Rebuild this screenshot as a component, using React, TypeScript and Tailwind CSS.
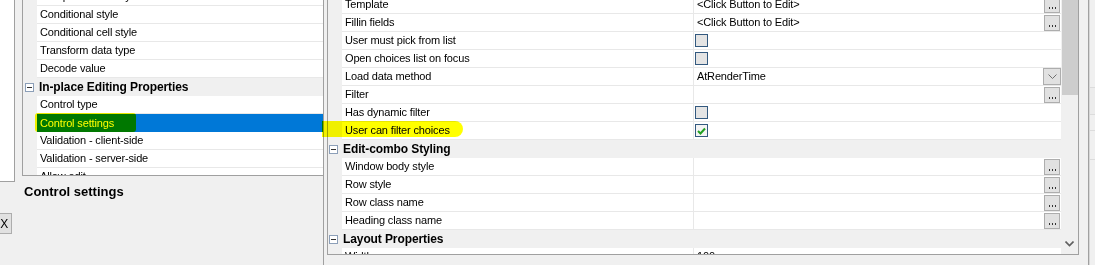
import React from "react";

type Item = {
  name: string;
  header?: boolean;
  value?: string;
  check?: "on" | "off";
  btn?: "dots" | "drop";
  selected?: boolean;
};

const backRows: Item[] = [
  { name: "Compute summary values" },
  { name: "Conditional style" },
  { name: "Conditional cell style" },
  { name: "Transform data type" },
  { name: "Decode value" },
  { name: "In-place Editing Properties", header: true },
  { name: "Control type" },
  { name: "Control settings", selected: true },
  { name: "Validation - client-side" },
  { name: "Validation - server-side" },
  { name: "Allow edit" },
];

const frontRows: Item[] = [
  { name: "Template", value: "<Click Button to Edit>", btn: "dots" },
  { name: "Fillin fields", value: "<Click Button to Edit>", btn: "dots" },
  { name: "User must pick from list", check: "off" },
  { name: "Open choices list on focus", check: "off" },
  { name: "Load data method", value: "AtRenderTime", btn: "drop" },
  { name: "Filter", btn: "dots" },
  { name: "Has dynamic filter", check: "off" },
  { name: "User can filter choices", check: "on" },
  { name: "Edit-combo Styling", header: true },
  { name: "Window body style", btn: "dots" },
  { name: "Row style", btn: "dots" },
  { name: "Row class name", btn: "dots" },
  { name: "Heading class name", btn: "dots" },
  { name: "Layout Properties", header: true },
  { name: "Width", value: "100" },
];

const Minus = () => (
  <span className="flex h-[9px] w-[9px] items-center justify-center border border-[#8c9fb8] bg-white">
    <span className="block h-[1px] w-[5px] bg-[#333]" />
  </span>
);

const Check = ({ on }: { on: boolean }) => (
  <span
    className={
      on
        ? "ml-[1px] flex h-[13px] w-[13px] items-center justify-center border border-[#33597f] bg-[#f4f4f4]"
        : "ml-[1px] flex h-[13px] w-[13px] items-center justify-center border border-[#33597f] bg-[#e4e4e4]"
    }
  >
    {on && (
      <svg width="9" height="8" viewBox="0 0 9 8">
        <path d="M1 4 L3.5 6.5 L8 1.5" fill="none" stroke="#22a022" strokeWidth="2" />
      </svg>
    )}
  </span>
);

const Dots = () => (
  <span className="mr-[1px] flex h-[16px] w-[16px] items-start justify-center gap-[2px] border border-[#adadad] bg-[#e1e1e1] pt-[9px]">
    <i className="block h-[2px] w-[1px] bg-[#333]" />
    <i className="block h-[2px] w-[1px] bg-[#333]" />
    <i className="block h-[2px] w-[1px] bg-[#333]" />
  </span>
);

const Drop = () => (
  <span className="flex h-[17px] w-[18px] items-center justify-center border border-[#adadad] bg-[#e1e1e1]">
    <svg width="9" height="5" viewBox="0 0 9 5">
      <path d="M0.5 0.5 L4.5 4.5 L8.5 0.5" fill="none" stroke="#707070" strokeWidth="1" />
    </svg>
  </span>
);

const BackRow = ({ r }: { r: Item }) => {
  if (r.header)
    return (
      <div className="flex h-[18px] items-center bg-[#f0f0f0] text-[12px] font-bold tracking-[-0.1px]">
        <span className="ml-[2px] mr-[5px]">
          <Minus />
        </span>
        {r.name}
      </div>
    );
  return (
    <div className="flex h-[18px]">
      <div className="w-[14px] bg-[#f0f0f0]" />
      <div
        className={
          r.selected
            ? "flex flex-1 items-center bg-[#0078d7] pl-[3px] text-white"
            : "flex flex-1 items-center border-b border-[#e8e8e8] bg-white pl-[3px]"
        }
      >
        {r.name}
      </div>
    </div>
  );
};

const FrontRow = ({ r }: { r: Item }) => {
  if (r.header)
    return (
      <div className="flex h-[18px] items-center bg-[#f0f0f0] text-[12px] font-bold tracking-[-0.1px]">
        <span className="ml-[1px] mr-[5px]">
          <Minus />
        </span>
        {r.name}
      </div>
    );
  return (
    <div className="flex h-[18px]">
      <div className="w-[14px] bg-[#f0f0f0]" />
      <div className="flex w-[351px] items-center border-b border-[#e8e8e8] bg-white pl-[3px]">
        {r.name}
      </div>
      <div className="flex flex-1 items-center border-b border-l border-[#e8e8e8] bg-white">
        {r.check && <Check on={r.check === "on"} />}
        <span className="flex-1 pl-[3px]">{r.value}</span>
        {r.btn === "dots" && <Dots />}
        {r.btn === "drop" && <Drop />}
      </div>
    </div>
  );
};

export default function App() {
  return (
    <div className="relative h-[265px] w-[1095px] overflow-hidden bg-[#f0f0f0] font-['Liberation_Sans',Arial,sans-serif] text-[11px] leading-none tracking-[-0.15px] text-black">
      {/* window behind */}
      <div className="flex h-full">
        <div className="w-[22px]">
          <div className="h-[182px] w-[15px] border-b border-r border-[#a0a0a0] bg-white" />
          <div className="mt-[31px] flex h-[21px] w-[12px] items-center justify-end overflow-hidden border-y border-r border-[#adadad] bg-[#e1e1e1] pr-[3px] text-[12px]">
            X
          </div>
        </div>
        <div className="w-[320px]">
          <div className="h-[176px] overflow-hidden border-b border-l border-[#a0a0a0]">
            <div className="mt-[-12px]">
              {backRows.map((r) => (
                <BackRow key={r.name} r={r} />
              ))}
            </div>
          </div>
          <div className="ml-[2px] mt-[9px] text-[13px] font-bold tracking-normal">Control settings</div>
        </div>
        <div className="ml-auto w-[6px] border-l border-[#d6d6d6]">
          <div className="mt-[87px] h-[28px] border-y border-[#dcdcdc] bg-[#ececec]" />
          <div className="mt-[15px] h-[30px] border-y border-[#dcdcdc]" />
        </div>
      </div>

      {/* front window */}
      <div className="absolute left-[323px] top-0 flex h-[265px] w-[766px] border-x border-[#a0a0a0] bg-[#f0f0f0] pl-[3px]">
        <div className="flex h-[255px] w-[752px] border-x border-b border-[#a0a0a0]">
          <div className="flex-1 overflow-hidden">
            <div className="mt-[-4px]">
              {frontRows.map((r) => (
                <FrontRow key={r.name} r={r} />
              ))}
            </div>
          </div>
          <div className="flex w-[17px] flex-col bg-[#f0f0f0]">
            <div className="ml-[1px] h-[95px] bg-[#cdcdcd]" />
            <div className="mt-auto flex h-[17px] items-center justify-center pb-[4px]">
              <svg width="9" height="6" viewBox="0 0 9 6">
                <path d="M0.5 0.5 L4.5 4.5 L8.5 0.5" fill="none" stroke="#606060" strokeWidth="1.6" />
              </svg>
            </div>
          </div>
        </div>
      </div>

      {/* highlighter marks */}
      <div className="absolute left-[35px] top-[113px] h-[19px] w-[101px] rounded-[3px] bg-[#ffff00] mix-blend-multiply" />
      <div className="absolute left-[322px] top-[121px] h-[16px] w-[141px] rounded-r-[8px] bg-[#ffff00] mix-blend-multiply" />
    </div>
  );
}
